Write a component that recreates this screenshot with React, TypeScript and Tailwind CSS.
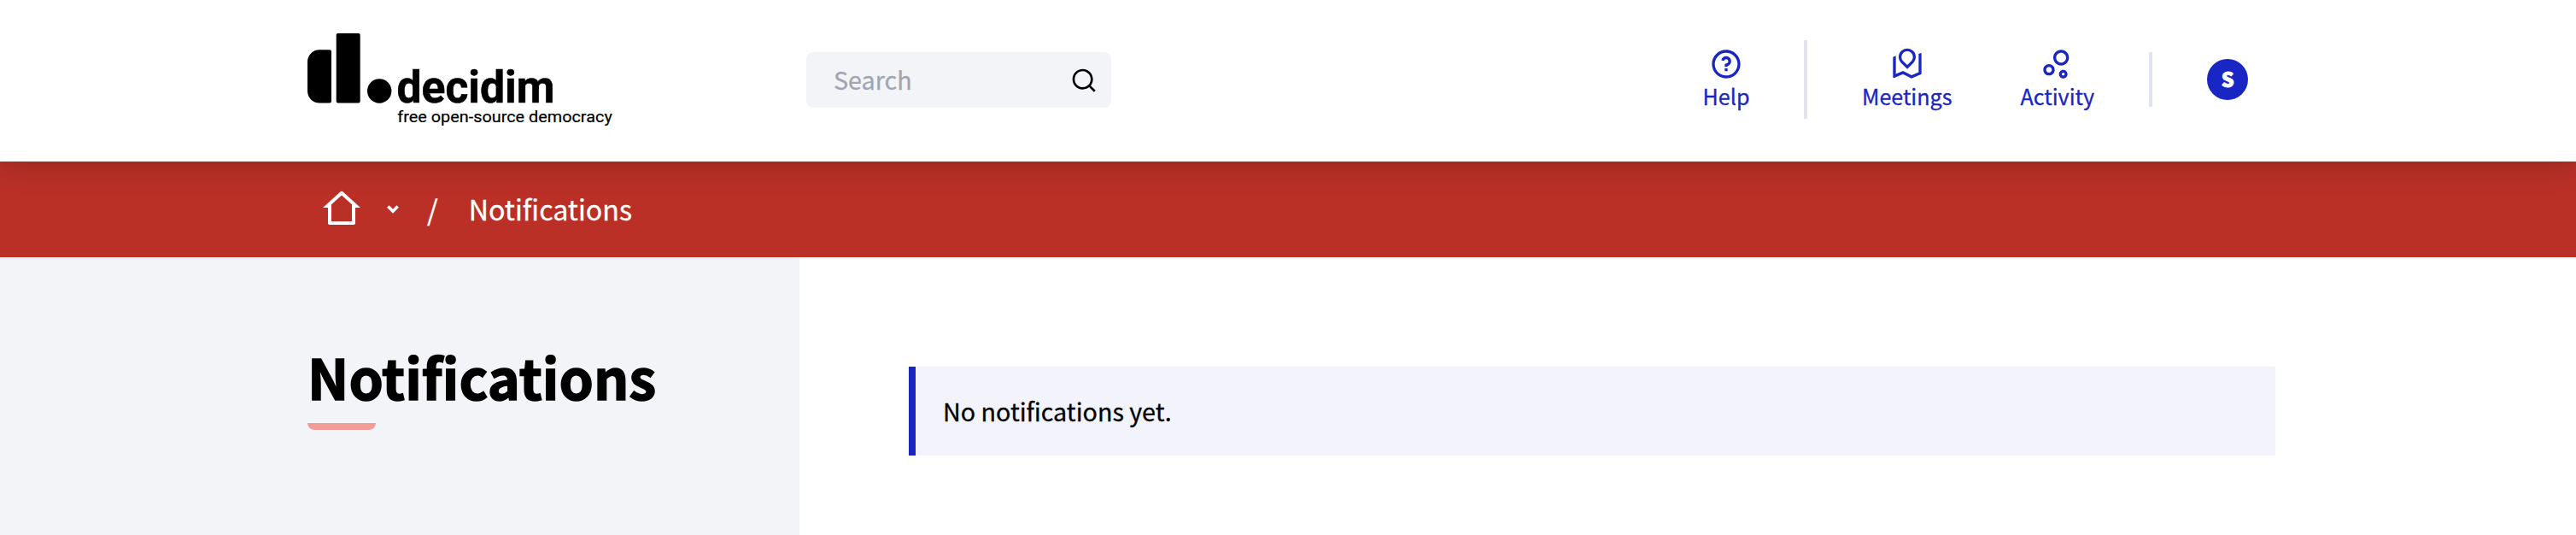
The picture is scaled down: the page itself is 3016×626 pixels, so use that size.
import React from "react";
import {
  RiQuestionLine,
  RiRoadMapLine,
  RiBubbleChartLine,
  RiSearchLine,
  RiHome2Line,
} from "react-icons/ri";

function Logo() {
  return (
    <svg width="360" height="112" viewBox="0 0 360 112" className="block shrink-0" fill="#000">
      <path d="M14 19.300H26Q28 19.300 28 21.300V79.600Q28 81.600 26 81.600H14A14 14 0 0 1 0 67.600V33.300A14 14 0 0 1 14 19.300Z" />
      <rect x="33.700" y="0" width="28" height="81.600" rx="2" />
      <circle cx="84.200" cy="67.500" r="14.200" />
      <text x="104.500" y="81.300" fontFamily="Roboto, sans-serif" fontWeight="700" fontSize="51" textLength="185" lengthAdjust="spacingAndGlyphs" stroke="#000" strokeWidth="0.6">
        decidim
      </text>
      <text x="105.300" y="103.700" fontFamily="Roboto, sans-serif" fontWeight="400" fontSize="18" textLength="251.500" lengthAdjust="spacingAndGlyphs" stroke="#000" strokeWidth="0.2">
        free open-source democracy
      </text>
    </svg>
  );
}

function NavItem({ icon, label }: { icon: React.ReactNode; label: string }) {
  return (
    <a className="flex flex-col items-center text-[40px] text-[#1a26c4]">
      {icon}
      <span className="text-[25.1px] leading-[35px]">{label}</span>
    </a>
  );
}

export default function App() {
  return (
    <div className="flex h-[626px] w-[3016px] flex-col overflow-hidden bg-white font-['Noto_Sans_CJK_SC',sans-serif] text-black [-webkit-text-stroke:0.3px_currentColor]">
      <header className="z-10 flex h-[189px] shrink-0 items-start bg-white pl-[360px] shadow-[0_4px_32px_rgba(0,0,0,0.2)]">
        <div className="pt-[39px]">
          <Logo />
        </div>
        <div className="mt-[61px] ml-[224px] flex h-[65px] w-[357px] items-center justify-between rounded-lg bg-[#f3f4f7] pr-4 pl-8">
          <span className="pb-0.5 text-[28.7px] leading-10 text-[#9fa6b2]">Search</span>
          <RiSearchLine className="size-8" />
        </div>
        <nav className="ml-[693px] flex w-[54px] justify-center pt-[55px]">
          <NavItem icon={<RiQuestionLine />} label="Help" />
        </nav>
        <div className="mt-[47px] ml-16 h-[92px] w-1 bg-[#e1e4ed]" />
        <nav className="ml-16 flex gap-20 pt-[55px]">
          <NavItem icon={<RiRoadMapLine />} label="Meetings" />
          <NavItem icon={<RiBubbleChartLine />} label="Activity" />
        </nav>
        <div className="mt-[61px] ml-16 h-16 w-1 bg-[#e1e4ed]" />
        <div className="mt-[69px] ml-16 flex size-12 items-center justify-center rounded-full bg-[#1a26c4] pb-px text-[23.5px] leading-none font-black text-white [-webkit-text-stroke:0.8px_currentColor]">
          S
        </div>
      </header>

      <div className="flex h-[112px] shrink-0 items-center bg-[#ba3027] pl-[376px] text-white">
        <RiHome2Line className="size-12" />
        <svg viewBox="0 0 32 32" className="ml-5 size-8" fill="none" stroke="currentColor" strokeWidth="3.5">
          <path d="M10.300 12.600L16 18.300L21.700 12.600" />
        </svg>
        <span className="ml-6 pb-0.5 text-[32.4px] leading-12">/</span>
        <span className="ml-9 pb-0.5 text-[32.2px] leading-12">Notifications</span>
      </div>

      <main className="flex grow">
        <aside className="w-[936px] bg-[#f3f4f7] pt-[94px] pl-[360px]">
          <h1 className="text-[64.6px] leading-[90px] font-bold [-webkit-text-stroke:1.5px_currentColor]">Notifications</h1>
          <div className="mt-[10px] h-2 w-20 rounded-b-lg bg-[#f29c98]" />
        </aside>
        <section className="pt-32 pl-32">
          <div className="flex h-[104px] w-[1600px] items-center border-l-8 border-[#1a26c4] bg-[#f3f3fc] pl-8 text-[28.7px]">
            No notifications yet.
          </div>
        </section>
      </main>
    </div>
  );
}
